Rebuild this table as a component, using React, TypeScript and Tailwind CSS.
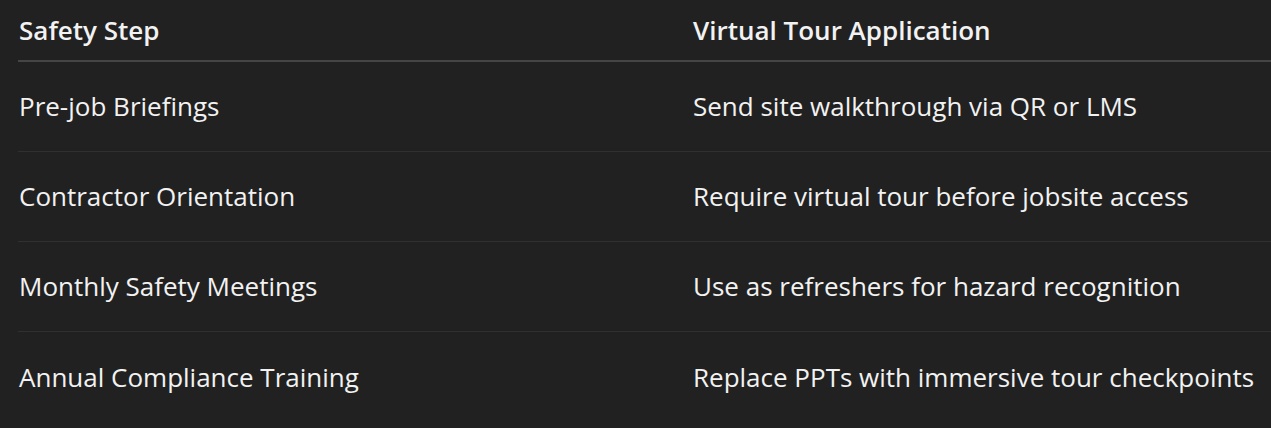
const rows = [
  ['Pre-job Briefings', 'Send site walkthrough via QR or LMS'],
  ['Contractor Orientation', 'Require virtual tour before jobsite access'],
  ['Monthly Safety Meetings', 'Use as refreshers for hazard recognition'],
  ['Annual Compliance Training', 'Replace PPTs with immersive tour checkpoints'],
];

export default function App() {
  return (
    <div
      className="min-h-[428px] w-full overflow-hidden bg-[#212121] pl-[18px] text-[26px] text-[#f2f2f2]"
      style={{ fontFamily: '"Open Sans", "Noto Sans", sans-serif' }}
    >
      {/* Kopfzeile */}
      <div className="grid h-[62px] grid-cols-[675px_1fr] items-center border-b-2 border-[#454545] font-semibold">
        <div className="pl-px">Safety Step</div>
        <div>Virtual Tour Application</div>
      </div>

      {rows.map(([step, use], i) => (
        <div
          key={step}
          className={`grid h-[90px] grid-cols-[675px_1fr] items-center ${
            i < rows.length - 1 ? 'border-b border-[#303030]' : ''
          }`}
        >
          <div className="pl-px">{step}</div>
          <div className="whitespace-nowrap">{use}</div>
        </div>
      ))}
    </div>
  );
}
